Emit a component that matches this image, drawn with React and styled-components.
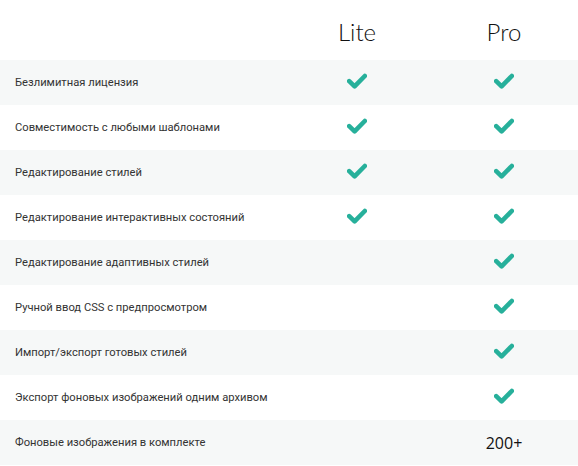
import React from "react";
import styled, { createGlobalStyle } from "styled-components";

const Global = createGlobalStyle`
  html, body { margin: 0; padding: 0; background: #fff; }
  body { font-family: Roboto, "Open Sans", sans-serif; }
`;

const Table = styled.div`
  width: 578px;
  display: grid;
  grid-template-columns: 284px 146px 148px;
`;

const HeadCell = styled.div`
  height: 60px;
  display: flex;
  align-items: center;
  justify-content: center;
  font-family: "Lato", sans-serif;
  font-weight: 300;
  font-size: 24px;
  color: #111;
  padding-top: 2px;
  box-sizing: border-box;
`;

const Cell = styled.div`
  height: 45px;
  display: flex;
  align-items: center;
  white-space: nowrap;
  background: ${(p) => (p.$shaded ? "#f6f8f8" : "#fff")};
  justify-content: ${(p) => (p.$label ? "flex-start" : "center")};
  padding-left: ${(p) => (p.$label ? "15px" : "0")};
  font-family: Roboto, "Open Sans", sans-serif;
  font-size: 11.2px;
  color: #333;
`;

const CheckSvg = styled.svg`
  width: 20px;
  height: 17px;
  margin-top: -2px;
  display: block;
`;

const Check = () => (
  <CheckSvg viewBox="0 0 20 17">
    <polyline
      points="2.2,8.2 7.6,13.4 17.8,3"
      fill="none"
      stroke="#27b09b"
      strokeWidth="4.6"
      strokeLinecap="round"
      strokeLinejoin="round"
    />
  </CheckSvg>
);

const Count = styled.span`
  font-family: "Open Sans", sans-serif;
  font-size: 16px;
  color: #111;
`;

const rows = [
  ["Безлимитная лицензия", true, true],
  ["Совместимость с любыми шаблонами", true, true],
  ["Редактирование стилей", true, true],
  ["Редактирование интерактивных состояний", true, true],
  ["Редактирование адаптивных стилей", false, true],
  ["Ручной ввод CSS с предпросмотром", false, true],
  ["Импорт/экспорт готовых стилей", false, true],
  ["Экспорт фоновых изображений одним архивом", false, true],
  ["Фоновые изображения в комплекте", false, "200+"],
];

const Value = ({ v }) =>
  v === true ? <Check /> : typeof v === "string" ? <Count>{v}</Count> : null;

export default function App() {
  return (
    <>
      <Global />
      <Table>
        <HeadCell />
        <HeadCell>Lite</HeadCell>
        <HeadCell>Pro</HeadCell>
        {rows.map(([label, lite, pro], i) => {
          const shaded = i % 2 === 0;
          return (
            <React.Fragment key={label}>
              <Cell $label $shaded={shaded}>{label}</Cell>
              <Cell $shaded={shaded}><Value v={lite} /></Cell>
              <Cell $shaded={shaded}><Value v={pro} /></Cell>
            </React.Fragment>
          );
        })}
      </Table>
    </>
  );
}
